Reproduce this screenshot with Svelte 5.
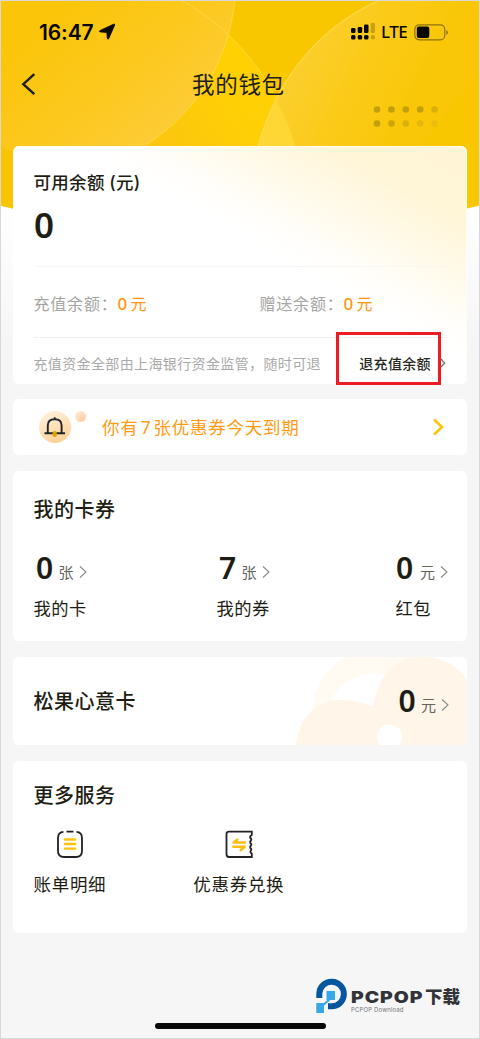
<script>
  const dots = [0.9, 0.9, 0.9, 0.9, 0.5, 0.9, 0.75, 0.5, 0.35, 0.22];
  const coupons = [
    { value: '0', unit: '张', label: '我的卡' },
    { value: '7', unit: '张', label: '我的券' },
    { value: '0', unit: '元', label: '红包' }
  ];
</script>

{#snippet chevron()}
  <svg class="chev" width="9" height="14" viewBox="0 0 9 14"><path d="M1 1.500 7 7 1 12.500" fill="none" stroke="#8c8c86" stroke-width="1.100" /></svg>
{/snippet}

<main>
  <svg class="backdrop" width="478" height="340" viewBox="1 1 478 340">
    <defs>
      <linearGradient id="left" gradientUnits="userSpaceOnUse" x1="40" y1="20" x2="150" y2="150">
        <stop offset="0" stop-color="#fbc509" /><stop offset=".5" stop-color="#fcc81c" /><stop offset="1" stop-color="#fdcc36" />
      </linearGradient>
      <linearGradient id="right" gradientUnits="userSpaceOnUse" x1="290" y1="50" x2="410" y2="110">
        <stop offset="0" stop-color="#fbcf31" /><stop offset=".55" stop-color="#fbca18" /><stop offset="1" stop-color="#f9c708" />
      </linearGradient>
      <linearGradient id="mid" gradientUnits="userSpaceOnUse" x1="170" y1="140" x2="240" y2="95">
        <stop offset="0" stop-color="#fcc70e" /><stop offset="1" stop-color="#ffd004" />
      </linearGradient>
      <linearGradient id="fade" x1="0" y1="0" x2="0" y2="1">
        <stop offset="0" stop-color="#fff" /><stop offset="1" stop-color="#f6f6f6" />
      </linearGradient>
      <clipPath id="hero"><path d="M0 0H480V205.500L467 208.500Q240 246 13 208.500L0 205.500Z" /></clipPath>
    </defs>
    <rect y="200" width="480" height="141" fill="url(#fade)" />
    <g clip-path="url(#hero)">
      <rect width="480" height="240" fill="#f9c700" />
      <path d="M0 0H181C230 27 274 75 296 146H0Z" fill="url(#mid)" />
      <path d="M0 0H235C228 62 196 113 146 145V152H0Z" fill="url(#left)" />
      <path d="M181 0C230 27 274 75 296 146M235 0C228 62 196 113 146 145" fill="none" stroke="#ffdc55" stroke-width=".7" />
      <path d="M378 0C323 25 278 73 258 146H420L480 70V0Z" fill="url(#right)" />
      <path d="M276 101Q289 122 295 146H258Q264 122 276 101Z" fill="#fed735" />
      <path d="M378 1C323 26 278 74 258 146" fill="none" stroke="#ffdf65" stroke-width=".8" />
      <path d="M0 145Q8 151 13 151V220H0Z" fill="#f9c500" />
      {#each dots as opacity, i}
        <circle cx={377 + (i % 5) * 14.4} cy={109.500 + Math.floor(i / 5) * 14} r="3.300" fill="#bd9a0c" {opacity} />
      {/each}
    </g>
  </svg>

  <header>
    <div class="status">
      <span class="time">16:47</span>
      <svg class="arrow" width="18" height="18" viewBox="0 0 18 18"><path d="M15.600 1.200Q17 .7 16.600 2.200L10.800 15.400Q9.800 17.300 9.300 15L8.800 9.500 2.500 8.900Q.3 8.400 2.200 7.400Z" fill="#080700" stroke="#080700" stroke-width=".8" stroke-linejoin="round" /></svg>
      <svg class="signal" width="26" height="18" viewBox="0 0 26 18" fill="#080700">
        <rect x="1" y="5" width="4.500" height="5" rx="1.300" /><rect x="7.700" y="4" width="4.500" height="6" rx="1.300" /><rect x="14" y="1.500" width="4.500" height="8.500" rx="1.300" />
        <rect x="1" y="12" width="4.500" height="4.500" rx="1.500" /><rect x="7.700" y="12" width="4.500" height="4.500" rx="1.500" /><rect x="14" y="12" width="4.500" height="4.500" rx="1.500" />
        <g fill="#c99f18"><rect x="20.700" y="0" width="4.300" height="10" rx="1.300" /><circle cx="22.900" cy="14.200" r="2.200" /></g>
      </svg>
      <span class="lte">LTE</span>
      <svg class="battery" width="35" height="17" viewBox="0 0 35 17"><rect x=".8" y=".8" width="30" height="15" rx="4.500" fill="none" stroke="#8e7310" stroke-width="1.200" /><rect x="2.800" y="2.500" width="12.500" height="11.500" rx="2" fill="#080700" /><path d="M32.500 6Q35 8.500 32.500 11Z" fill="#6f5908" /></svg>
    </div>
    <div class="nav">
      <svg width="15" height="24" viewBox="0 0 15 24"><path d="M13.300 2.200 2.300 12.200 13.300 22.200" fill="none" stroke="#1c2028" stroke-width="2.400" /></svg>
      <h1>我的钱包</h1>
    </div>
  </header>

  <section class="card balance">
    <h2>可用余额<span>(元)</span></h2>
    <strong class="total">0</strong>
    <div class="split">
      <p>充值余额：<b>0</b><em>元</em></p>
      <p>赠送余额：<b>0</b><em>元</em></p>
    </div>
    <div class="notice">
      <span>充值资金全部由上海银行资金监管，随时可退</span>
      <a>退充值余额<svg width="6" height="10" viewBox="0 0 6 10"><path d="M1 1 4.700 5 1 9" fill="none" stroke="#77776f" stroke-width="1.300" /></svg></a>
      <i class="highlight"></i>
    </div>
  </section>

  <section class="card alert">
    <svg width="52" height="40" viewBox="0 0 52 40">
      <defs>
        <linearGradient id="peach" x1=".2" y1="0" x2=".6" y2="1"><stop offset="0" stop-color="#fff2e0" /><stop offset="1" stop-color="#ffd094" /></linearGradient>
        <linearGradient id="ball" x1="0" y1="0" x2="1" y2="1"><stop offset="0" stop-color="#fff0e0" /><stop offset="1" stop-color="#ffc894" /></linearGradient>
      </defs>
      <circle cx="17" cy="20" r="16" fill="url(#peach)" /><circle cx="42.500" cy="9.500" r="5.500" fill="url(#ball)" />
      <path d="M6.500 26.200H27M9.800 26V18.500Q9.800 12.200 16.700 12.200T23.600 18.500V26M16.700 12.300V10.200" fill="none" stroke="#202529" stroke-width="1.900" />
      <ellipse cx="16.700" cy="27" rx="2.200" ry="3" fill="#dfa000" />
    </svg>
    <span>你有<b>7</b>张优惠券今天到期</span>
    <svg class="go" width="13" height="18" viewBox="0 0 13 18"><path d="M2 1.500 10 9 2 16.500" fill="none" stroke="#fec40a" stroke-width="2.600" /></svg>
  </section>

  <section class="card coupons">
    <h2>我的卡券</h2>
    <div class="stats">
      {#each coupons as item}
        <div class="stat">
          <div class="amount"><strong>{item.value}</strong><span>{item.unit}</span>{@render chevron()}</div>
          <p>{item.label}</p>
        </div>
      {/each}
    </div>
  </section>

  <section class="card gift">
    <svg class="flower" width="174" height="88" viewBox="293 657 174 88">
      <path d="M312 745V715Q314 675 346 657H421V684H390L325 720Z" fill="#fffaf2" />
      <path d="M326 720Q331 682 365 674.500Q378 671.500 391 676L373 720Z" fill="#fff" />
      <path d="M296 745C300 714 319 700 341 700Q356 700 373 706.500Q382 657 423 657Q452 657 467 680V745Z" fill="#fff5e9" />
      <circle cx="389.500" cy="737" r="12.600" fill="#fff" />
    </svg>
    <h2>松果心意卡</h2>
    <div class="amount"><strong>0</strong><span>元</span>{@render chevron()}</div>
  </section>

  <section class="card services">
    <h2>更多服务</h2>
    <div class="actions">
      <div class="action">
        <svg width="28" height="29" viewBox="0 0 28 29" fill="none"><path d="M7.500 1.800Q2 2 2 8V21Q2 27 8 27H20Q26 27 26 21V8Q26 2 20.500 1.800M10.500 1.700H17.500" stroke="#202225" stroke-width="1.800" /><path d="M8.800 9.500H19.200M8.800 14H19.200M8.800 18.700H19.200" stroke="#ffc408" stroke-width="2.300" stroke-linecap="round" /></svg>
        <p>账单明细</p>
      </div>
      <div class="action">
        <svg width="28" height="29" viewBox="0 0 28 29" fill="none"><path d="M26.800 1.700H4Q1.500 1.700 1.500 4V24Q1.500 27 4 27H26.800V23.500Q24.500 22.500 26 20.500Q27 19.300 25.300 18Q24.500 16.800 26 15.500Q27 14.300 25.300 13Q24.500 11.800 26 10.500Q27 9.300 25.300 8Q24.500 6 26.800 5Z" stroke="#202225" stroke-width="1.800" /><path d="M20 12.600H8.500L12.300 9.500M8.300 16.800H19.700L15.700 20.300" stroke="#ffbd12" stroke-width="2.500" stroke-linecap="round" stroke-linejoin="round" /></svg>
        <p>优惠券兑换</p>
      </div>
    </div>
  </section>

  <div class="watermark">
    <svg width="32" height="36" viewBox="0 0 32 36"><path d="M3.300 20V15.500A12.300 12.300 0 1 1 15.500 28.300H12" fill="none" stroke="#04579f" stroke-width="6" /><path d="M14 21 5 29" stroke="#35a5e4" stroke-width="2" /><path d="M10.500 13H19V22H10.500ZM.3 25H8V35H.3Z" fill="#37a7e7" /></svg>
    <div><b><span>PCPOP</span>下载</b><small>PCPOP Download</small></div>
  </div>
  <div class="home"></div>
</main>

<style>
  :global(body) { margin: 0; }
  main { box-sizing: border-box; position: relative; width: 480px; height: 1039px; padding: 0 12px; border: 1px solid #dad7da; background: #f6f6f6; overflow: hidden; color: #1d1d13; font-family: Inter, "Noto Sans CJK SC", sans-serif; }
  h1, h2, p { margin: 0; }
  h2 { font-weight: 500; font-size: 20px; letter-spacing: .5px; line-height: 30px; }
  .backdrop { position: absolute; left: 0; top: 0; }
  header { position: relative; height: 144.500px; }
  .status { display: flex; align-items: center; height: 32px; padding: 15px 18px 0 26px; color: #080700; }
  .time { width: 59px; font-size: 21px; font-weight: 600; letter-spacing: -.1px; }
  .signal { margin: 0 5px 0 auto; }
  .lte { width: 29px; font: 500 17px/20px "Noto Sans", sans-serif; letter-spacing: -.5px; }
  .battery { margin-left: 4px; }
  .nav { display: flex; align-items: center; height: 30px; margin-top: 21px; padding-left: 8px; }
  .nav h1 { margin-left: 156px; padding-top: 2px; font-size: 22.500px; line-height: 30px; font-weight: 400; letter-spacing: .7px; }
  .card { box-sizing: border-box; position: relative; width: 454px; margin-bottom: 16px; border-radius: 6px; background: #fff; }
  .balance { height: 238px; margin-bottom: 15.500px; padding: 25px 20px 0 20.500px; background: linear-gradient(209deg, #fff4d6 0, #fff5d7 15%, #fffaea 28%, #fffefb 38%, #fff 44%); box-shadow: inset -1px 1px #fffdf4; }
  .balance h2 { height: 24px; line-height: 24px; font-size: 17.500px; letter-spacing: .3px; }
  .balance h2 span { margin-left: 4.500px; }
  .total { display: block; height: 71.500px; padding-left: .5px; line-height: 59px; font-size: 35px; font-weight: 600; font-family: "Noto Sans", sans-serif; }
  .split { box-sizing: border-box; display: grid; grid-template-columns: 226px 1fr; height: 72px; border-top: 1px solid #f7f6f2; border-bottom: 1px solid #f1f1f1; }
  .split p { display: flex; align-items: center; font-size: 16px; letter-spacing: .8px; color: #a5a5a2; padding-top: 2px; }
  .split b { width: 13px; color: #ff9710; font: 500 17px "Noto Sans", sans-serif; }
  .split em { color: #ff9710; font-style: normal; }
  .notice { position: relative; display: flex; justify-content: space-between; align-items: center; height: 49px; padding: 0 1px 0 0; box-sizing: border-box; font-size: 14px; letter-spacing: .37px; color: #aaa; }
  .notice a { display: flex; align-items: center; gap: 9px; color: #28281e; font-weight: 500; }
  .highlight { position: absolute; left: 302.500px; top: -6px; width: 99px; height: 47px; border: 3px solid #ed1b24; }
  .alert { display: flex; align-items: center; height: 56px; padding: 0 22px 0 25px; }
  .alert > span { margin: -2px 0 0 12px; font-size: 17.500px; letter-spacing: .75px; color: #ff9b14; }
  .alert b { display: inline-block; width: 15px; text-align: center; font: 400 18px "Noto Sans", sans-serif; }
  .go { margin-left: auto; }
  .coupons { height: 170px; padding: 24px 20px 0 20.500px; }
  .stats { display: grid; grid-template-columns: 183px 179px auto; margin-top: 24px; }
  .amount { display: flex; align-items: baseline; height: 40px; line-height: 40px; }
  .amount strong { width: 22.500px; padding-left: 2.500px; font: 600 30px/38px "Noto Sans", sans-serif; }
  .amount span { font-size: 15px; color: #65655e; transform: translateY(-1px); }
  .chev { margin-left: 5px; align-self: center; transform: translateY(3px); }
  .stat p { margin-top: 6px; font-size: 17.300px; line-height: 28px; letter-spacing: .5px; }
  .stat:last-child .amount strong { width: 24px; padding-left: .5px; }
  .gift { display: flex; align-items: center; justify-content: space-between; height: 88px; padding: 2px 17px 0 20.500px; overflow: hidden; }
  .gift h2, .gift .amount { position: relative; }
  .flower { position: absolute; right: 0; top: 0; }
  .services { height: 172px; padding: 20px 21px 0 20.500px; margin: 0; }
  .actions { display: flex; gap: 87px; margin-top: 18.500px; }
  .action { display: flex; flex-direction: column; align-items: center; }
  .action svg { display: block; }
  .action p { margin-top: 12px; font-size: 17.500px; line-height: 28px; letter-spacing: .7px; }
  .watermark { position: absolute; left: 315px; top: 977px; display: flex; gap: 3px; color: #333438; }
  .watermark div { display: flex; flex-direction: column; padding-top: 9px; }
  .watermark b { display: flex; font-size: 17.500px; line-height: 20px; font-weight: 900; white-space: nowrap; }
  .watermark b span { display: inline-block; width: 64px; margin-right: 10px; font-size: 16px; letter-spacing: .8px; transform: scaleX(1.210); transform-origin: left; }
  .watermark small { font-size: 6px; line-height: 5px; letter-spacing: .15px; color: #77777a; }
  .home { position: absolute; left: 154px; top: 1022px; width: 171px; height: 6px; border-radius: 3px; background: #080808; }
</style>
